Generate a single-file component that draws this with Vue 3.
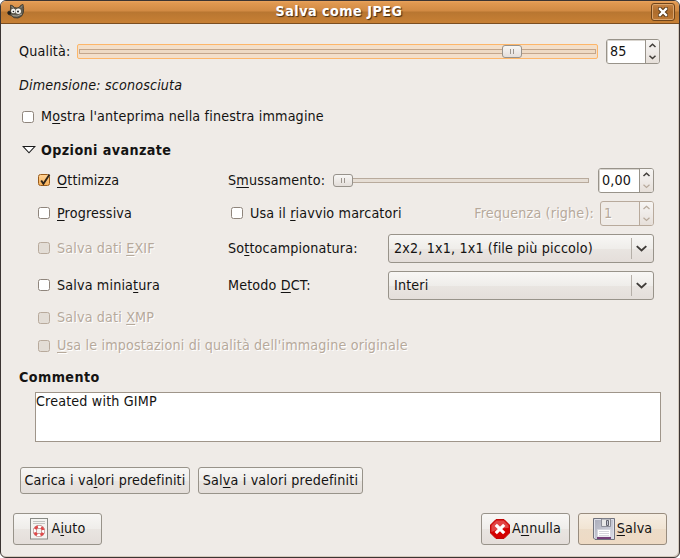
<script setup>
import { ref } from 'vue'

const quality = ref(85)
const comment = ref('Created with GIMP')
</script>

<template>
  <div class="window">
    <header class="titlebar">
      <svg class="wilber" width="18" height="16" viewBox="0 0 18 16">
        <path d="M3.4 7 L3.6 1 Q6 1.4 7.6 3.6 Q10 4.4 12 3.4 Q13.4 .8 16 .4 Q17 4.6 16.4 8.6 Q15.4 13 11 14 Q6.4 14.6 4.4 11.6 L1.4 10.4 Q.2 8.4 1.2 7.4Z" fill="#605c50" stroke="#39352c" stroke-width=".8" />
        <path d="M4.4 2.6 Q6 3 6.6 5 M13.8 3.8 Q14.6 2.2 15.5 1.8" fill="none" stroke="#99958a" />
        <circle cx="6.3" cy="7" r="2.3" fill="#f4f4f0" /><circle cx="11.3" cy="7.2" r="2.7" fill="#f4f4f0" />
        <circle cx="6.4" cy="7.5" r=".8" fill="#222" /><circle cx="11" cy="7.6" r="1" fill="#222" />
        <ellipse cx="2.4" cy="9" rx="1.9" ry="1.7" fill="#23211d" />
        <path d="M5.4 11.6 Q10 13.2 15 10" fill="none" stroke="#a9a498" />
      </svg>
      <h1>Salva come JPEG</h1>
      <button class="close" aria-label="Chiudi">
        <svg width="10" height="10" viewBox="0 0 10 10"><path d="M2 2 8 8M8 2 2 8" stroke="#583817" stroke-width="4.4" stroke-linecap="square" /><path d="M2 2 8 8M8 2 2 8" stroke="#fff" stroke-width="2.4" stroke-linecap="square" /></svg>
      </button>
    </header>

    <main>
      <div class="row quality">
        <label class="q-label">Qualità:</label>
        <div class="scale focused"><i class="trough"></i><i class="thumb" :style="{ left: quality + '%' }"></i></div>
        <div class="spin q-spin">
          <span class="entry">{{ quality }}</span>
          <span class="steps"><svg width="13" height="23" viewBox="0.5 0 13 23"><path class="up" d="M4 7 7 4.2 10 7" /><path class="down" d="M4 15.7 7 18.5 10 15.7" /></svg></span>
        </div>
      </div>
      <p class="size"><em>Dimensione: sconosciuta</em></p>
      <div class="row preview"><i class="check"></i><label>M<u>o</u>stra l'anteprima nella finestra immagine</label></div>
      <div class="row expander">
        <svg width="14" height="8" viewBox="0 0 14 8"><path d="M1.2 .5H12.8L7 6.8Z" fill="#fff" stroke="#1a1a1a" stroke-width="1.1" /></svg>
        <b>Opzioni avanzate</b>
      </div>

      <section class="advanced">
        <div class="line l1">
          <div class="left"><i class="check on"><svg width="14" height="14" viewBox="0 0 14 14"><path d="M3.2 7.5 5.4 10.8 11.5 1.6" /></svg></i><label><u>O</u>ttimizza</label></div>
          <label class="t-smooth">S<u>m</u>ussamento:</label>
          <div class="scale small"><i class="trough"></i><i class="thumb first"></i></div>
          <div class="spin s-spin">
            <span class="entry">0,00</span>
            <span class="steps"><svg width="13" height="23" viewBox="0.5 0 13 23"><path class="up" d="M4 7 7 4.2 10 7" /><path class="down dim" d="M4 15.7 7 18.5 10 15.7" /></svg></span>
          </div>
        </div>
        <div class="line l2">
          <div class="left"><i class="check"></i><label><u>P</u>rogressiva</label></div>
          <i class="check restart"></i><label>Usa il <u>r</u>iavvio marcatori</label>
          <label class="off freq">Frequenza (righe):</label>
          <div class="spin f-spin disabled">
            <span class="entry">1</span>
            <span class="steps"><svg width="13" height="23" viewBox="0.5 0 13 23"><path class="up dim" d="M4 7 7 4.2 10 7" /><path class="down dim" d="M4 15.7 7 18.5 10 15.7" /></svg></span>
          </div>
        </div>
        <div class="line l3">
          <div class="left"><i class="check off"></i><label class="off">Salva dati <u>E</u>XIF</label></div>
          <label>So<u>t</u>tocampionatura:</label>
          <div class="combo"><span>2x2, 1x1, 1x1 (file più piccolo)</span><svg width="22" height="21" viewBox="0 0 22 21"><path d="M5 8 10 12.6 15 8" /></svg></div>
        </div>
        <div class="line l4">
          <div class="left"><i class="check"></i><label>Salva minia<u>t</u>ura</label></div>
          <label>Metodo <u>D</u>CT:</label>
          <div class="combo"><span>Interi</span><svg width="22" height="21" viewBox="0 0 22 21"><path d="M5 8 10 12.6 15 8" /></svg></div>
        </div>
        <div class="line l5"><i class="check off"></i><label class="off">Salva dati <u>X</u>MP</label></div>
        <div class="line l6"><i class="check off"></i><label class="off"><u>U</u>sa le impostazioni di qualità dell'immagine originale</label></div>
      </section>

      <h2>Commento</h2>
      <div class="comment">{{ comment }}</div>
      <div class="defaults">
        <button class="btn load"><span>Carica i va<u>l</u>ori predefiniti</span></button>
        <button class="btn store"><span>Sal<u>v</u>a i valori predefiniti</span></button>
      </div>
    </main>

    <footer>
      <button class="btn action help">
        <svg width="18" height="22" viewBox="0 0 18 22">
          <rect x=".5" y=".5" width="17" height="20.5" fill="#f4f4f1" stroke="#888a85" />
          <path d="M3 3.5H15M3 5.5H15" stroke="#c3c4c1" />
          <circle cx="9" cy="13" r="4.3" fill="none" stroke="#a06060" stroke-width="3.6" />
          <circle cx="9" cy="13" r="4.3" fill="none" stroke="#fff" stroke-width="2.6" />
          <circle cx="9" cy="13" r="4.3" fill="none" stroke="#e04848" stroke-width="2.6" stroke-dasharray="3.4 3.354" stroke-dashoffset="-1.7" />
        </svg>
        <span>A<u>i</u>uto</span>
      </button>
      <button class="btn action cancel">
        <svg width="20" height="20" viewBox="0 0 20 20">
          <path d="M6 .5H14L19.5 6V14L14 19.5H6L.5 14V6Z" fill="#d40000" stroke="#c00808" />
          <path d="M6.4 1.4H13.6L18.6 6.4V9Q10 9 1.4 13V6.4Z" fill="#e55b5b" opacity=".75" />
          <path d="M6.9 6.9 13.1 13.1M13.1 6.9 6.9 13.1" stroke="#fff" stroke-width="3.2" stroke-linecap="square" />
        </svg>
        <span>A<u>n</u>nulla</span>
      </button>
      <button class="btn action save">
        <svg width="22" height="22" viewBox="0 0 22 22">
          <defs><linearGradient id="disk" x1="0" y1="0" x2="1" y2="1"><stop offset="0" stop-color="#a9abb8" /><stop offset="1" stop-color="#dcdee8" /></linearGradient></defs>
          <path d="M.5 .5H21.5V21.5H2L.5 20Z" fill="url(#disk)" stroke="#70727c" />
          <path d="M1.5 20V1.5H20.5V20.5" fill="none" stroke="#dfe1ea" />
          <path d="M8.5 1H17.5V8.5H8.5Z" fill="#e8e8e8" stroke="#8c8e98" />
          <path d="M13.5 2.5H15.5V7.5H13.5Z" fill="#c3c5d2" stroke="#62646e" />
          <path d="M4.5 11.5H17.5V19H4.5Z" fill="#fff" stroke="#d4d6de" />
          <path d="M6 13.5H16M6 15.5H16M6 17.5H16" stroke="#d6d7dc" />
          <path d="M4 19H18V21H4Z" fill="#754078" />
        </svg>
        <span><u>S</u>alva</span>
      </button>
    </footer>
  </div>
</template>

<style>
body {
  margin: 0;
  background: #fff;
}
</style>

<style scoped>
.window {
  box-sizing: border-box;
  width: 680px;
  height: 558px;
  display: flex;
  flex-direction: column;
  overflow: hidden;
  border: 1px solid #3b3432;
  border-radius: 6px;
  background: #efebe7;
  box-shadow: inset -1px -1px #d3c9bd;
  color: #141312;
  font: 14.2px/18px 'DejaVu Sans Condensed', 'DejaVu Sans', sans-serif;
  letter-spacing: 0.16px;
  white-space: nowrap;
}
u {
  text-decoration-thickness: 1px;
  text-underline-offset: 2px;
  text-decoration-skip-ink: none;
}
i { font-style: normal; }
button { font: inherit; color: inherit; letter-spacing: inherit; padding: 0; }
.titlebar {
  box-sizing: border-box;
  height: 23px;
  flex: none;
  display: flex;
  align-items: center;
  justify-content: space-between;
  padding: 0 4px 0 6px;
  background: linear-gradient(#e9a45f 0, #e09850 2px, #d18a43 10px, #b87631 11px, #c67f34 21px);
  border-bottom: 1px solid #7b4e21;
}
.titlebar h1 {
  margin: 0 0 2px 2px;
  font-size: 14.2px;
  line-height: 18px;
  letter-spacing: 0.48px;
  color: #fff;
  text-shadow: 1px 1px 1px #3d2a16;
}
.close {
  box-sizing: border-box;
  width: 24px;
  height: 18px;
  display: grid;
  place-items: center;
  border: 1px solid #6f441a;
  border-radius: 3px;
  background: linear-gradient(#c78343, #ad6c2c 50%, #bf7a35);
  box-shadow: inset 0 0 0 1px #dba56d;
}
main { flex: none; padding: 0 18px; }
.row, .line, .left { display: flex; align-items: center; }
.quality { height: 25px; margin-top: 15px; }
.q-label { width: 58px; margin-bottom: 1px; }
.scale {
  position: relative;
  box-sizing: border-box;
  display: flex;
  align-items: center;
  height: 15px;
}
.focused {
  width: 521px;
  padding: 0 1px;
  border: 1px solid #fdb669;
  border-radius: 2px;
  background: #f3dfca;
}
.trough {
  box-sizing: border-box;
  width: 100%;
  height: 5px;
  border: 1px solid #b8aa9c;
  background: #e6ded5;
}
.focused .trough { border-color: #c3a68c; background: #eedac4; }
.thumb {
  position: absolute;
  box-sizing: border-box;
  top: 0;
  width: 20px;
  height: 13px;
  margin-left: -17px;
  border: 1px solid #97928b;
  border-radius: 3px;
  background:
    linear-gradient(#9c958e, #9c958e) 7px 3px / 1px 5px no-repeat,
    linear-gradient(#9c958e, #9c958e) 10px 3px / 1px 5px no-repeat,
    linear-gradient(#f8f7f5, #e4deda);
}
.thumb.first { left: 0; top: 1px; margin: 0; }
.spin {
  box-sizing: border-box;
  display: flex;
  height: 25px;
  border: 1px solid #98938a;
  border-radius: 3px;
  overflow: hidden;
  background: #fff;
}
.entry {
  flex: 1;
  padding-left: 3px;
  line-height: 23px;
  border-right: 1px solid #98938a;
  box-shadow: inset 1px 1px #d9d5cf;
}
.steps { width: 13px; background: linear-gradient(#f7f5f3, #efebe8 50%, #e6dfd9); }
.steps svg { display: block; }
.steps path { fill: none; stroke: #413d39; stroke-width: 1.5; }
.steps path.dim { stroke: #b8aa9c; stroke-width: 1.2; }
.q-spin { width: 54px; margin-left: 8px; }
.s-spin { width: 56px; margin-left: 9px; }
.f-spin { width: 54px; margin-left: 6px; }
.spin.disabled { background: #efebe7; border-color: #b8aa9c; color: #b6a99b; }
.disabled .entry { border-color: #b8aa9c; box-shadow: none; text-shadow: 1px 1px #fff; }
.size { margin: 12px 0 0; }
.preview { margin: 14px 0 0 3px; height: 18px; }
.preview label, .l5 label, .l6 label { margin-bottom: 2px; }
.check {
  box-sizing: border-box;
  flex: none;
  width: 12px;
  height: 12px;
  margin-right: 7px;
  border: 1px solid #8f857c;
  border-radius: 2.5px;
  background: #fff;
}
.check.on { position: relative; border-color: #9b5b18; background: linear-gradient(#ffd193, #f7b25c); }
.check.on svg { position: absolute; left: -1px; top: -2px; }
.check.on path { fill: none; stroke: #2f251a; stroke-width: 1.9; }
.check.off { border-color: #b8aa9c; background: #e3ddd6; }
label.off { color: #b6a99b; text-shadow: 1px 1px #fff; }
.expander { margin: 15px 0 0 3px; height: 18px; }
.expander svg { margin-right: 5px; }
b, h2 { letter-spacing: 0.4px; }
.advanced { padding: 9px 7px 0 19px; }
.left { width: 190px; flex: none; }
.l1, .l2 { height: 25px; }
.l1 label, .l2 label, .l3 label, .l4 label { margin-bottom: 1px; }
.l1 .check, .l2 .check, .l3 .check, .l4 .check { margin-bottom: 1px; }
.l2, .l3, .l4 { margin-top: 8px; }
.l3, .l4 { height: 29px; }
.t-smooth { width: 105px; }
.small { width: 256px; }
.restart { margin-left: 3px; }
.freq { margin-left: auto; }
.l5 { height: 18px; margin-top: 9px; }
.l6 { height: 18px; margin-top: 10px; }
.combo {
  box-sizing: border-box;
  width: 266px;
  height: 29px;
  margin-left: auto;
  display: flex;
  align-items: center;
  justify-content: space-between;
  padding-left: 5px;
  border: 1px solid #98938a;
  border-radius: 3px;
  background: linear-gradient(#f8f7f5, #efedea 50%, #e9e5e1 51%, #e4deda);
}
.combo span { margin-bottom: 1px; }
.combo svg { box-sizing: border-box; border-left: 1px solid #b5afa8; }
.combo path { fill: none; stroke: #3f3b38; stroke-width: 2; }
h2 { margin: 13px 0 0; font-size: 14.2px; line-height: 18px; }
.comment {
  box-sizing: border-box;
  width: 626px;
  height: 50px;
  margin: 6px 0 0 16px;
  border: 1px solid #9f958a;
  background: #fff;
  line-height: 17px;
}
.defaults { display: flex; gap: 8px; margin: 25px 0 0 1px; }
.btn {
  box-sizing: border-box;
  display: flex;
  align-items: center;
  justify-content: center;
  height: 27px;
  border: 1px solid #98938a;
  border-radius: 3px;
  background: linear-gradient(#f8f7f5, #efedea 50%, #e9e5e1 51%, #e4deda);
}
.btn span { margin-bottom: 2px; }
.load { width: 170px; }
.store { width: 165px; }
footer { display: flex; gap: 8px; margin-top: 19px; padding: 0 12px; }
.action { width: 89px; height: 32px; }
.action span { margin-left: 4px; }
.cancel { margin-left: auto; }
.action.cancel span { margin-left: 2px; }
.action.save span { margin-left: 2px; }
.save { border-color: #988c7e; background: linear-gradient(#f6eee3, #f1e4d3 50%, #ecdcc8 51%, #eedac4); }
</style>
